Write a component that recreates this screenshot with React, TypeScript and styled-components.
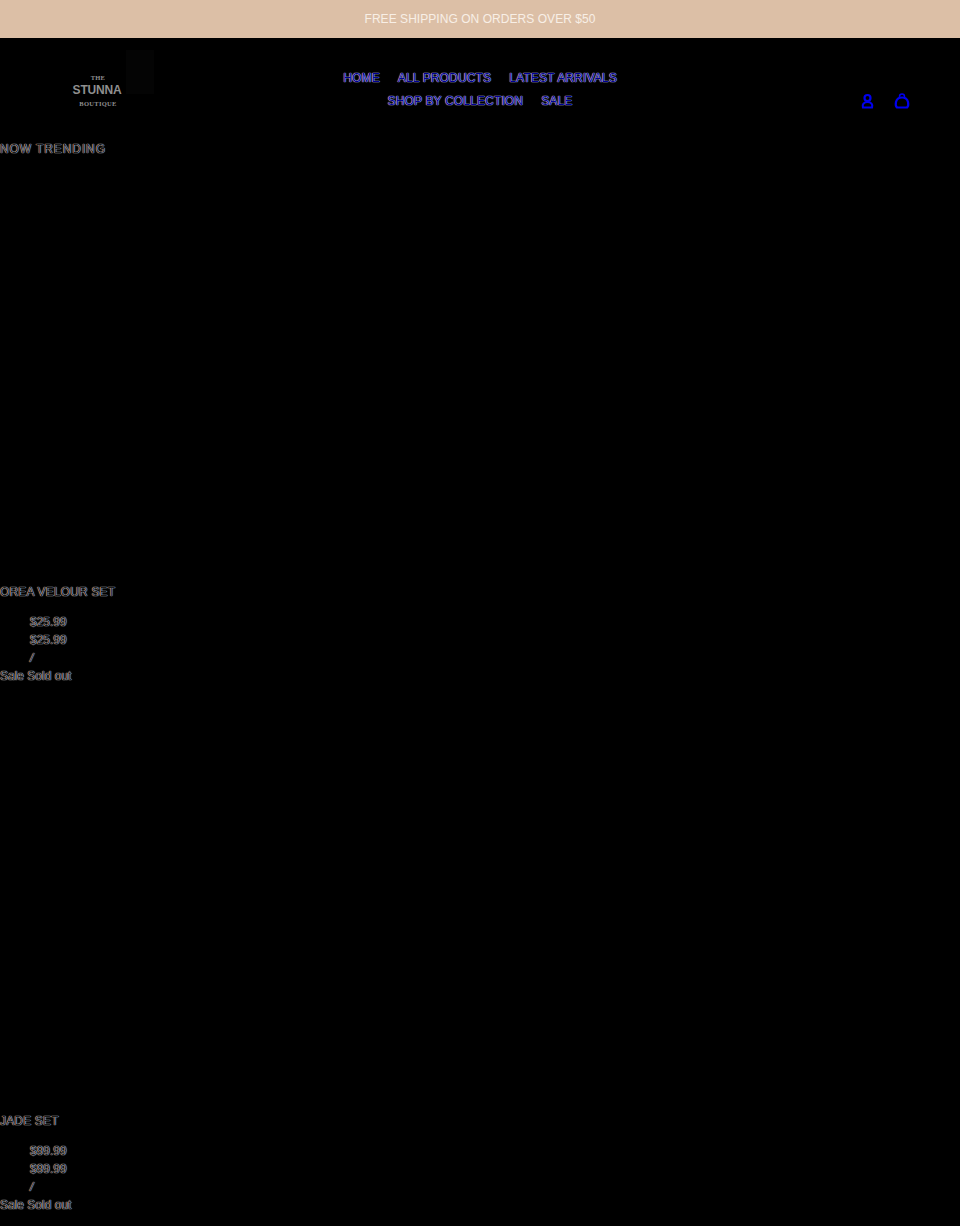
import React from "react";
import styled, { createGlobalStyle } from "styled-components";

const Global = createGlobalStyle`
  html, body { margin: 0; padding: 0; background: #000; }
  body { font-family: "Liberation Sans", Arial, sans-serif; overflow: hidden; }
`;

const Page = styled.div`
  width: 960px;
  height: 1226px;
  background: #000;
  overflow: hidden;
`;

const Announcement = styled.div`
  height: 38px;
  background: #dcbfa6;
  color: #f8efe6;
  display: flex;
  align-items: center;
  justify-content: center;
  font-size: 12px;
  letter-spacing: 0.05px;
`;

const Header = styled.header`
  display: grid;
  grid-template-columns: 280px 1fr 280px;
  height: 91px;
  align-items: center;
`;

const LogoCell = styled.div`
  padding-left: 72px;
  height: 91px;
  display: flex;
  flex-direction: column;
  justify-content: center;
`;

const Logo = styled.div`
  position: relative;
  width: 50px;
  display: flex;
  flex-direction: column;
  align-items: center;
  font-family: "Liberation Serif", serif;
  color: #8f8f8f;
  margin-top: 14px;

  &::after {
    content: "";
    position: absolute;
    left: 54px;
    top: -24px;
    width: 28px;
    height: 44px;
    background: #040404;
  }
`;

const LogoSmall = styled.span<{ $wide?: boolean }>`
  font-size: 6.5px;
  line-height: 9px;
  font-weight: 700;
  letter-spacing: ${(p) => (p.$wide ? 0.3 : 0.2)}px;
  margin-top: ${(p) => (p.$wide ? 2 : -1)}px;
  margin-bottom: ${(p) => (p.$wide ? 0 : 1)}px;
  margin-left: 2px;
`;

const LogoBig = styled.span`
  font-family: "Liberation Sans", sans-serif;
  font-size: 12px;
  line-height: 14px;
  font-weight: 700;
  letter-spacing: -0.2px;
`;

const Nav = styled.nav`
  display: flex;
  flex-wrap: wrap;
  justify-content: center;
  column-gap: 18px;
  row-gap: 5px;
  margin-top: 12px;
  padding: 0 50px;
`;

const NavLink = styled.a`
  color: #000090;
  font-size: 12px;
  line-height: 18px;
  letter-spacing: 0.15px;
  text-shadow: 0 0 1px #d0d0ff, 0 0 1px #d0d0ff, 0 0 1px #b0b0ff;
`;

const Icons = styled.div`
  display: flex;
  justify-content: flex-end;
  gap: 17px;
  padding: 0 49px 0 0;
  margin-top: 34px;
  color: #0000ee;
`;

const Heading = styled.h2<{ $spacing: number }>`
  margin: 0;
  height: 20px;
  font-size: 12px;
  line-height: 20px;
  font-weight: 400;
  letter-spacing: ${(p) => p.$spacing}px;
  color: #1a1a1a;
  text-shadow: 0 0 1px #fff, 0 0 1px #fff;
`;

const Product = styled.section<{ $gap: number }>`
  margin-top: ${(p) => p.$gap}px;
`;

const Title = styled(Heading)`
  margin-bottom: 11px;
`;

const Price = styled.div`
  margin-left: 30px;
  height: 18px;
  font-size: 12px;
  line-height: 18px;
  color: #1a1a1a;
  text-shadow: 0 0 1px #fff, 0 0 1px #fff;
`;

const Slash = styled(Price)`
  font-style: italic;
`;

const Status = styled.div`
  height: 18px;
  font-size: 12px;
  line-height: 18px;
  color: #1a1a1a;
  text-shadow: 0 0 1px #fff, 0 0 1px #fff;
`;

function AccountIcon() {
  return (
    <svg width="18" height="18" viewBox="0 0 18 18" fill="none" stroke="currentColor" strokeWidth="2.2">
      <circle cx="9.500" cy="6" r="3" />
      <path d="M5 15.500c-1.200-3 1-5.500 4.500-5.500s5.700 2.500 4.500 5.500z" />
    </svg>
  );
}

function BagIcon() {
  return (
    <svg width="18" height="18" viewBox="0 0 18 18" fill="none" stroke="currentColor" strokeWidth="2.2">
      <path d="M4 15.500c-1.500-1-1.500-3-1-5.500.7-3 3-4.500 6-4.500s5.300 1.500 6 4.500c.5 2.500.5 4.500-1 5.500z" />
      <path d="M6.500 6V4.500a2.500 2.500 0 0 1 5 0V6" strokeWidth="1.500" />
    </svg>
  );
}

function ProductInfo({ title, price }: { title: string; price: string }) {
  return (
    <>
      <Title $spacing={0.17}>{title}</Title>
      <Price>{price}</Price>
      <Price>{price}</Price>
      <Slash>/</Slash>
      <Status>Sale Sold out</Status>
    </>
  );
}

export default function App() {
  return (
    <Page>
      <Global />
      <Announcement>FREE SHIPPING ON ORDERS OVER $50</Announcement>
      <Header>
        <LogoCell>
          <Logo>
            <LogoSmall>THE</LogoSmall>
            <LogoBig>STUNNA</LogoBig>
            <LogoSmall $wide>BOUTIQUE</LogoSmall>
          </Logo>
        </LogoCell>
        <Nav>
          <NavLink>HOME</NavLink>
          <NavLink>ALL PRODUCTS</NavLink>
          <NavLink>LATEST ARRIVALS</NavLink>
          <NavLink>SHOP BY COLLECTION</NavLink>
          <NavLink>SALE</NavLink>
        </Nav>
        <Icons>
          <AccountIcon />
          <BagIcon />
        </Icons>
      </Header>
      <Product $gap={10}>
        <Heading $spacing={0.9}>NOW TRENDING</Heading>
      </Product>
      <Product $gap={423}>
        <ProductInfo title="OREA VELOUR SET" price="$25.99" />
      </Product>
      <Product $gap={426}>
        <ProductInfo title="JADE SET" price="$99.99" />
      </Product>
    </Page>
  );
}
